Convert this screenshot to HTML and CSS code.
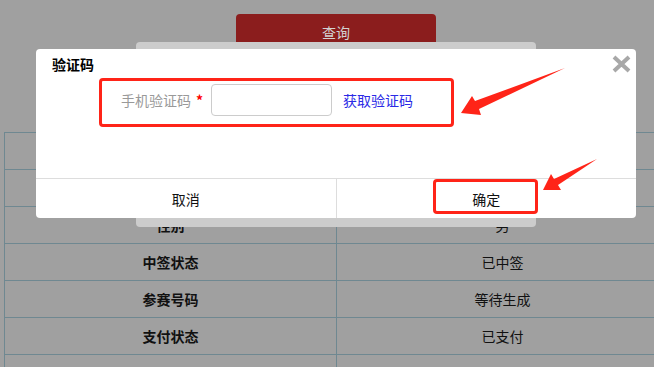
FILE: index.html
```html
<!DOCTYPE html>
<html lang="zh-CN">
<head>
    <meta charset="UTF-8">
    <title>查询</title>
    <link rel="stylesheet" href="styles.css">
</head>
<body>
    <div class="page">
        <button class="search-btn">查询</button>
        <table class="info-table">
            <tr><td></td><td></td></tr>
            <tr><td></td><td></td></tr>
            <tr><td>性别</td><td>男</td></tr>
            <tr><td>中签状态</td><td>已中签</td></tr>
            <tr><td>参赛号码</td><td>等待生成</td></tr>
            <tr><td>支付状态</td><td>已支付</td></tr>
            <tr><td></td><td></td></tr>
        </table>
    </div>

    <div class="back-dialog"><span class="back-close">×</span></div>

    <div class="dialog">
        <div class="dialog-title">验证码</div>
        <svg class="dialog-close" width="19" height="18" viewBox="0 0 19 18">
            <path d="M2 2 L17 16 M17 2 L2 16" stroke="#a8a8a8" stroke-width="4"/>
        </svg>
        <div class="form-row">
            <label class="form-label">手机验证码</label>
            <span class="required">*</span>
            <input class="code-input" type="text">
            <a class="get-code" href="#">获取验证码</a>
        </div>
        <div class="dialog-footer">
            <button class="footer-btn cancel">取消</button>
            <button class="footer-btn ok">确定</button>
        </div>
    </div>

    <!-- annotations -->
    <div class="mark mark-form"></div>
    <div class="mark mark-ok"></div>
    <svg class="arrows" width="654" height="367" viewBox="0 0 654 367">
        <polygon points="461,113 472,96 475,101 565,68 479,109 481,115" fill="#ff2418"/>
        <polygon points="543,190 551,174 554,179 597,159 558,185 561,190" fill="#ff2418"/>
    </svg>
</body>
</html>
```

FILE: styles.css
```css
html {
    overflow: hidden;
}
body {
    margin: 0;
    width: 654px;
    height: 367px;
    overflow: hidden;
    background-color: #a0a0a0;
    font-family: "Noto Sans CJK SC", "Noto Sans", sans-serif;
    font-size: 14px;
    position: relative;
}
.page {
    padding-top: 14px;
}
.search-btn {
    display: block;
    margin-left: 236px;
    width: 200px;
    height: 36px;
    border: none;
    border-radius: 4px;
    background-color: #8b1d1d;
    color: #d2d2d2;
    font-family: inherit;
    font-size: 14px;
    padding: 0;
}
.info-table {
    margin-top: 82px;
    margin-left: 4px;
    width: 665px;
    border-collapse: collapse;
    table-layout: fixed;
}
.info-table td {
    height: 36px;
    padding: 0;
    border: 1px solid #6f8891;
    text-align: center;
    color: #111;
}
.info-table td:first-child {
    font-weight: bold;
}
.back-dialog {
    position: absolute;
    left: 136px;
    top: 42px;
    width: 400px;
    height: 185px;
    background-color: #cccccc;
    border-radius: 4px;
}
.back-close {
    position: absolute;
    right: 8px;
    top: -4px;
    font-size: 22px;
    color: #9a9a9a;
}
.dialog {
    position: absolute;
    left: 36px;
    top: 49px;
    width: 600px;
    height: 169px;
    background-color: #fff;
    border-radius: 4px;
    display: flex;
    flex-direction: column;
}
.dialog-title {
    padding: 5px 16px 0;
    line-height: 20px;
    font-weight: bold;
    color: #000;
}
.dialog-close {
    position: absolute;
    right: 5px;
    top: 6px;
}
.form-row {
    display: flex;
    align-items: center;
    margin-top: 10px;
    padding-left: 85px;
    height: 32px;
}
.form-label {
    color: #999;
}
.required {
    color: #f00;
    margin-left: 5px;
    font-weight: bold;
}
.code-input {
    margin-left: 8px;
    width: 121px;
    height: 32px;
    box-sizing: border-box;
    border: 1px solid #ccc;
    border-radius: 4px;
}
.get-code {
    margin-left: 11px;
    color: #2a2ae6;
    text-decoration: none;
}
.dialog-footer {
    margin-top: auto;
    display: flex;
    height: 39px;
    border-top: 1px solid #ddd;
}
.footer-btn {
    flex: 1;
    border: none;
    background: none;
    font-family: inherit;
    font-size: 14px;
    color: #111;
    padding: 0;
}
.cancel {
    border-right: 1px solid #ddd;
}
.mark {
    position: absolute;
    border: 3px solid #ff2418;
    border-radius: 4px;
    box-sizing: border-box;
}
.mark-form {
    left: 99px;
    top: 78px;
    width: 355px;
    height: 49px;
}
.mark-ok {
    left: 433px;
    top: 179px;
    width: 105px;
    height: 35px;
}
.arrows {
    position: absolute;
    left: 0;
    top: 0;
}
```
